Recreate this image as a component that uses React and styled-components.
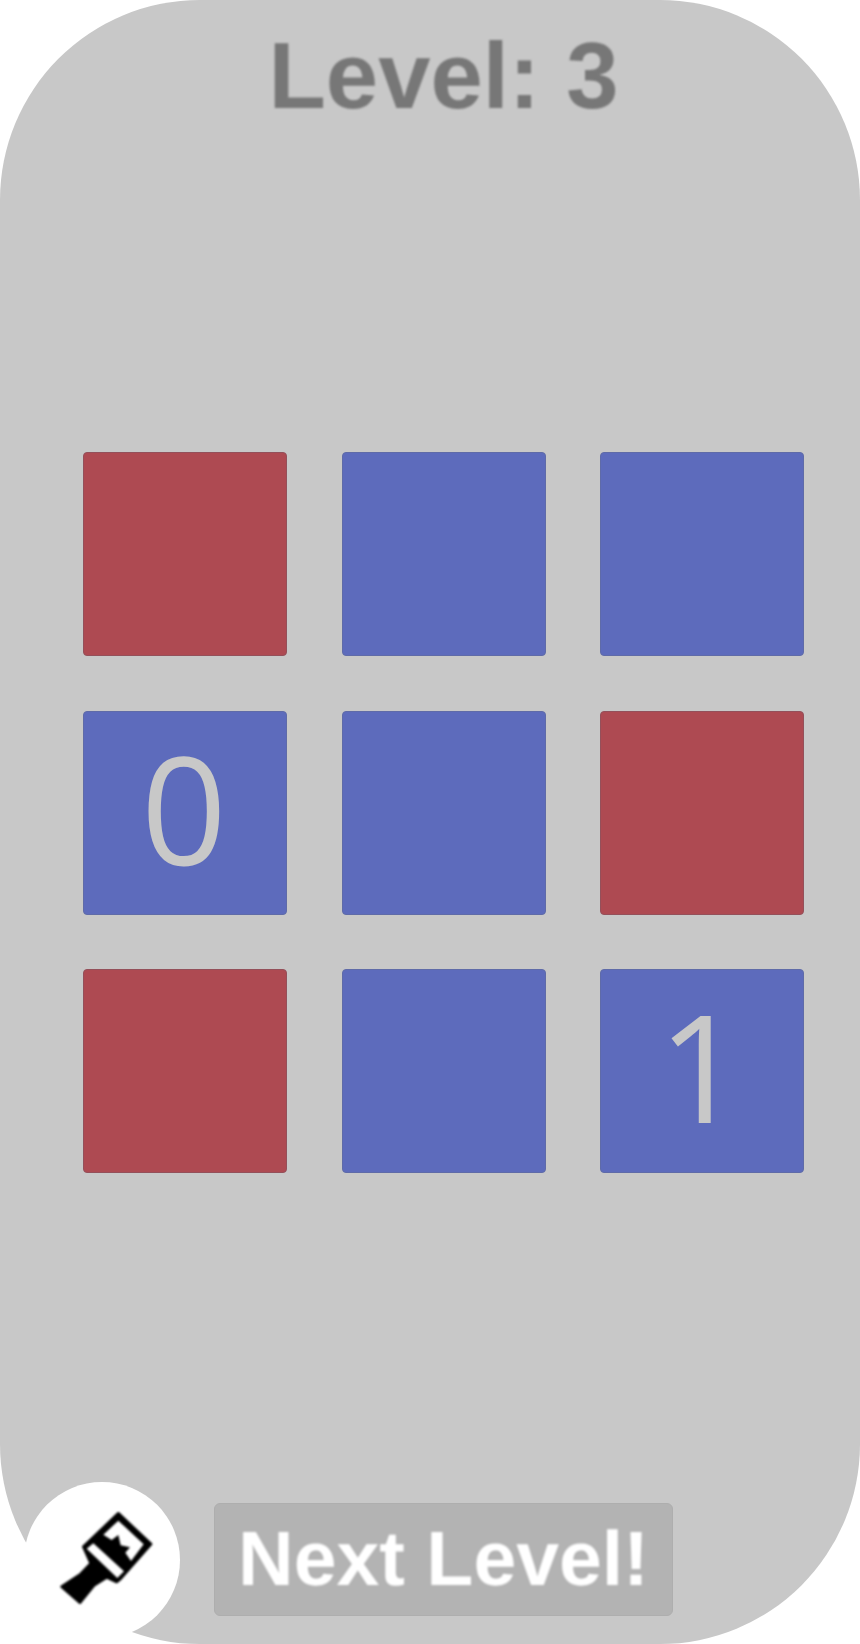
import React from "react";
import styled, { createGlobalStyle } from "styled-components";

const Global = createGlobalStyle`
  html, body { margin: 0; padding: 0; background: #fff; }
  * { box-sizing: border-box; }
`;

const Screen = styled.main`
  position: relative;
  width: 860px;
  height: 1644px;
  padding: 0 56px 28px 83px;
  display: flex;
  flex-direction: column;
  background: #c8c8c8;
  border-radius: 200px;
  font-family: "Liberation Sans", Arial, sans-serif;
  text-rendering: geometricPrecision;
`;

const Title = styled.h1`
  margin: 26px 0 0;
  height: 100px;
  line-height: 100px;
  font-size: 94px;
  font-weight: 700;
  text-align: center;
  color: #777;
  filter: blur(0.8px);
`;

const Board = styled.section`
  margin-top: 326px;
  display: grid;
  grid-template-columns: repeat(3, 204px);
  grid-auto-rows: 204px;
  gap: 54.5px;
`;

const Tile = styled.div`
  display: flex;
  align-items: center;
  justify-content: center;
  border-radius: 4px;
  border: 1px solid ${(p) => (p.$red ? "#94505a" : "#5f6ba8")};
  background: ${(p) => (p.$red ? "#ae4a52" : "#5d6bbc")};
  color: #c8c8c8;
  font-family: "Open Sans", "Liberation Sans", sans-serif;
  font-size: 150px;
  line-height: 1;
`;

const TileLabel = styled.span`
  filter: blur(0.6px);
  transform: translate(-1px, -6px);
`;

const Footer = styled.footer`
  margin-top: auto;
  display: flex;
  justify-content: center;
`;

const NextButton = styled.button`
  width: 459px;
  height: 113px;
  padding: 0;
  border: 1px solid #aeaeae;
  border-radius: 6px;
  background: #b3b3b3;
  color: #fff;
  font-family: inherit;
  font-size: 77px;
  font-weight: 700;
  text-rendering: geometricPrecision;
`;

const ButtonLabel = styled.span`
  display: block;
  filter: blur(0.8px);
`;

const BrushBadge = styled.div`
  position: absolute;
  left: 24px;
  top: 1482px;
  width: 156px;
  height: 156px;
  border-radius: 50%;
  background: #fff;
  display: flex;
  align-items: center;
  justify-content: center;
`;

const BrushSvg = styled.svg`
  margin-left: 16px;
  filter: blur(0.9px);
`;

const BrushIcon = () => (
  <BrushSvg width="120" height="120" viewBox="0 0 360 360">
    <path
      d="M205 40 L303 132 L212 236 L200 246 L170 232 L132 256 L90 308 L35 260 L92 222 L122 190 L100 140 Z"
      fill="#000"
      stroke="#000"
      strokeWidth="8"
      strokeLinejoin="round"
    />
    <path
      d="M205 62 L281 133 L243 183 L226 158 L240 142 L212 136 L205 105 L185 120 L160 104 Z"
      fill="#fff"
    />
    <path d="M130 130 L222 214 L202 234 L110 146 Z" fill="#fff" />
  </BrushSvg>
);

const tiles = [
  { red: true }, {}, {},
  { label: "0" }, {}, { red: true },
  { red: true }, {}, { label: "1" },
];

export default function App() {
  return (
    <>
      <Global />
      <Screen>
        <Title>Level: 3</Title>
        <Board>
          {tiles.map((t, i) => (
            <Tile key={i} $red={t.red}>
              {t.label && <TileLabel>{t.label}</TileLabel>}
            </Tile>
          ))}
        </Board>
        <Footer>
          <NextButton>
            <ButtonLabel>Next Level!</ButtonLabel>
          </NextButton>
        </Footer>
        <BrushBadge>
          <BrushIcon />
        </BrushBadge>
      </Screen>
    </>
  );
}
